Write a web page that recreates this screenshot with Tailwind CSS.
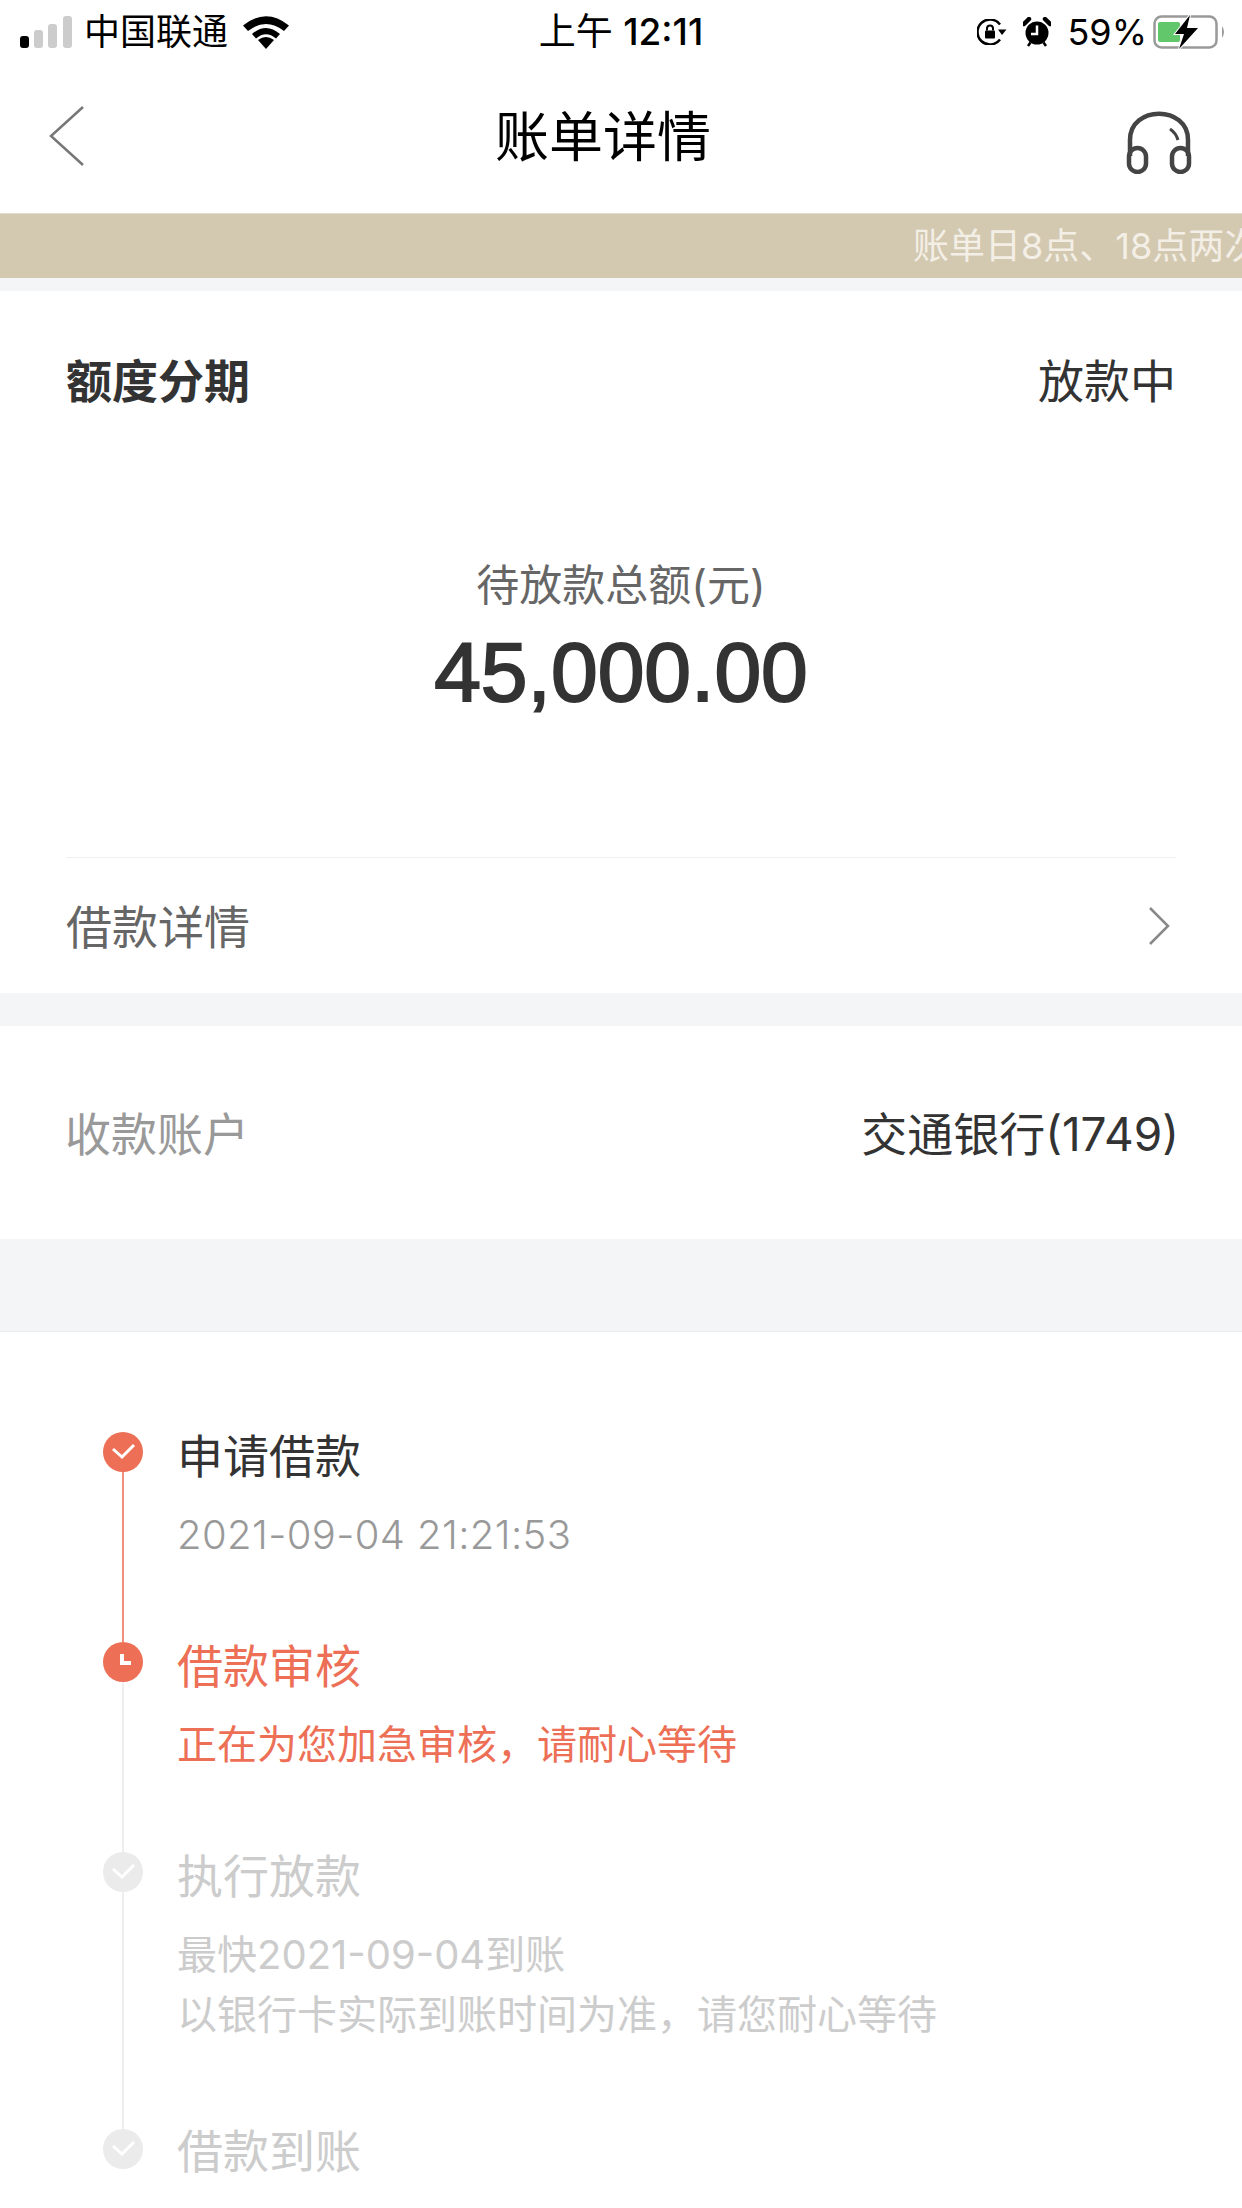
<!DOCTYPE html>
<html lang="zh-CN">
<head>
  <meta charset="UTF-8" />
  <title>账单详情</title>
  <script src="https://cdn.jsdelivr.net/npm/@tailwindcss/browser@4"></script>
</head>
<body class="h-[2208px] overflow-hidden bg-white font-['Inter','Noto_Sans_CJK_SC',sans-serif] text-[#333]">

  <!-- 状态栏 -->
  <div class="h-[63px] grid grid-cols-[1fr_auto_1fr] items-center text-black">
    <div class="flex items-center pl-[20px] pt-[1px]">
      <svg width="52" height="34" viewBox="0 0 52 34">
        <rect x="0" y="21" width="9" height="12" rx="3" fill="#000" />
        <rect x="14" y="15" width="9" height="18" rx="3" fill="#ccc" />
        <rect x="28" y="9" width="9" height="24" rx="3" fill="#ccc" />
        <rect x="43" y="1" width="9" height="32" rx="3" fill="#ccc" />
      </svg>
      <span class="ml-[12px] text-[36px] leading-none">中国联通</span>
      <svg class="ml-[15px]" width="46" height="33" viewBox="0 0 46 33">
        <path d="M23 33 L15 24 Q23 18 31 24 Z" fill="#000" />
        <path d="M9 18 Q23 6 37 18 L33 22.500 Q23 14 13 22.500 Z" fill="#000" />
        <path d="M0 9.500 Q23 -9 46 9.500 L41 15 Q23 1 5 15 Z" fill="#000" />
      </svg>
    </div>
    <div class="text-[37px] leading-none whitespace-nowrap">上午 <span class="font-medium">12:11</span></div>
    <div class="flex items-center justify-end pr-[16px]">
      <svg width="30" height="26" viewBox="0 0 30 26">
        <path d="M23 5.500 A12.500 12.500 0 1 0 23 20.500" fill="none" stroke="#000" stroke-width="2.500" />
        <path d="M21 10.500 L29.500 10.500 L25 16 Z" fill="#000" />
        <rect x="8" y="11.500" width="10" height="8" rx="1" fill="#000" />
        <path d="M10 11.500 V9.500 A3 3 0 0 1 16 9.500 V11.500" fill="none" stroke="#000" stroke-width="2" />
      </svg>
      <svg class="ml-[16px]" width="28" height="30" viewBox="0 0 28 30">
        <circle cx="14" cy="16" r="11.500" fill="#000" />
        <path d="M1 7 L6 2 M27 7 L22 2" stroke="#000" stroke-width="4.500" stroke-linecap="round" />
        <path d="M5 29 L7.500 25.500 M23 29 L20.500 25.500" stroke="#000" stroke-width="2.500" />
        <path d="M14 8.500 V17 H8" fill="none" stroke="#fff" stroke-width="2.500" />
      </svg>
      <span class="ml-[16px] text-[36px] leading-none">59%</span>
      <svg class="ml-[6px]" width="73" height="34" viewBox="0 0 73 34">
        <rect x="1.500" y="1.500" width="62" height="31" rx="7" fill="none" stroke="#999" stroke-width="2.500" />
        <path d="M69 11 Q73 17 69 23 Z" fill="#999" />
        <rect x="5" y="7" width="22" height="20" rx="2" fill="#62c76b" />
        <path d="M37 0 L22 19 H31 L26 34 L45 13 H34 Z" fill="#000" stroke="#fff" stroke-width="2" paint-order="stroke" />
      </svg>
    </div>
  </div>

  <!-- 导航栏 -->
  <div class="h-[150px] flex items-center pl-[49px] pr-[50px]">
    <svg class="mt-[-4px]" width="35" height="60" viewBox="0 0 35 60">
      <path d="M34 1 L2 30 L34 59" fill="none" stroke="#777" stroke-width="2.500" />
    </svg>
    <h1 class="ml-[411px] text-[54px] leading-none text-black">账单详情</h1>
    <svg class="ml-auto mt-[8px]" width="66" height="64" viewBox="0 0 66 64">
      <path d="M4 46 V30 C4 -5 62 -5 62 30 V46" fill="none" stroke="#444" stroke-width="4.500" />
      <path d="M44 19 Q50 23 52 30" fill="none" stroke="#444" stroke-width="3" />
      <rect x="3" y="38" width="17" height="24" rx="8.500" fill="none" stroke="#444" stroke-width="4.500" />
      <rect x="46" y="38" width="17" height="24" rx="8.500" fill="none" stroke="#444" stroke-width="4.500" />
    </svg>
  </div>

  <!-- 公告条 -->
  <div class="h-[65px] bg-[#d3c8b0] border-t border-[#e3dccd] overflow-hidden flex items-center pl-[913px] text-[36px] leading-none text-[#f3efe6] whitespace-nowrap">
    账单日8点、18点两次放款
  </div>
  <div class="h-[13px] bg-[#f4f5f7]"></div>

  <!-- 金额卡片 -->
  <div class="h-[702px] px-[66px] flex flex-col">
    <div class="h-[180px] flex items-center justify-between text-[46px] leading-none">
      <span class="font-semibold">额度分期</span>
      <span>放款中</span>
    </div>
    <div class="mt-[87px] flex flex-col items-center">
      <p class="text-[43px] leading-[54px] text-[#666]">待放款总额(元)</p>
      <p class="mt-[14px] font-['Liberation_Sans',sans-serif] text-[84px] leading-[92px] [-webkit-text-stroke:2px_#333]">45,000.00</p>
    </div>
    <div class="mt-auto h-[136px] border-t border-[#f0f0f0] flex items-center justify-between">
      <span class="pt-[3px] text-[46px] leading-none text-[#666]">借款详情</span>
      <svg class="mr-[6px]" width="22" height="38" viewBox="0 0 22 38">
        <path d="M2 1 L20 19 L2 37" fill="none" stroke="#888" stroke-width="2.500" />
      </svg>
    </div>
  </div>
  <div class="h-[33px] bg-[#f4f5f7]"></div>

  <!-- 收款账户 -->
  <div class="h-[213px] px-[66px] pt-[3px] flex items-center justify-between text-[46px] leading-none">
    <span class="ml-[-1px] text-[#999]">收款账户</span>
    <span class="mr-[-3px]">交通银行(1749)</span>
  </div>
  <div class="h-[93px] bg-[#f4f5f7] border-b border-[#ebebeb]"></div>

  <!-- 进度 -->
  <div class="pt-[100px] pl-[103px]">
    <div class="h-[210px] flex">
      <div class="w-[40px] flex flex-col items-center">
        <svg width="40" height="40" viewBox="0 0 40 40">
          <circle cx="20" cy="20" r="20" fill="#ec6f56" />
          <path d="M10 17 L19 25 L31 13" fill="none" stroke="#fff" stroke-width="3" />
        </svg>
        <div class="w-[2px] flex-1 bg-[#f28e7c]"></div>
      </div>
      <div class="ml-[34px]">
        <p class="text-[46px] leading-[48px]">申请借款</p>
        <p class="mt-[25px] text-[40px] leading-[60px] font-light tracking-[0.4px] text-[#999]">2021-09-04 21:21:53</p>
      </div>
    </div>
    <div class="h-[210px] flex">
      <div class="w-[40px] flex flex-col items-center">
        <svg width="40" height="40" viewBox="0 0 40 40">
          <circle cx="20" cy="20" r="20" fill="#ec6f56" />
          <path d="M19 12 V21 H28" fill="none" stroke="#fff" stroke-width="4" />
        </svg>
        <div class="w-[2px] flex-1 bg-[#eeeeee]"></div>
      </div>
      <div class="ml-[34px] text-[#ec6f56]">
        <p class="text-[46px] leading-[48px]">借款审核</p>
        <p class="mt-[25px] text-[40px] leading-[60px]">正在为您加急审核&#65292;请耐心等待</p>
      </div>
    </div>
    <div class="h-[277px] flex">
      <div class="w-[40px] flex flex-col items-center">
        <svg width="40" height="40" viewBox="0 0 40 40">
          <circle cx="20" cy="20" r="20" fill="#ebebeb" />
          <path d="M10 17 L19 25 L31 13" fill="none" stroke="#fff" stroke-width="3" />
        </svg>
        <div class="w-[2px] flex-1 bg-[#eeeeee]"></div>
      </div>
      <div class="ml-[34px] text-[#cccccc]">
        <p class="text-[46px] leading-[48px]">执行放款</p>
        <p class="mt-[25px] text-[40px] leading-[60px]">最快2021-09-04到账<br />以银行卡实际到账时间为准&#65292;请您耐心等待</p>
      </div>
    </div>
    <div class="flex">
      <div class="w-[40px]">
        <svg width="40" height="40" viewBox="0 0 40 40">
          <circle cx="20" cy="20" r="20" fill="#ebebeb" />
          <path d="M10 17 L19 25 L31 13" fill="none" stroke="#fff" stroke-width="3" />
        </svg>
      </div>
      <div class="ml-[34px] text-[#cccccc]">
        <p class="text-[46px] leading-[44px]">借款到账</p>
      </div>
    </div>
  </div>

</body>
</html>
